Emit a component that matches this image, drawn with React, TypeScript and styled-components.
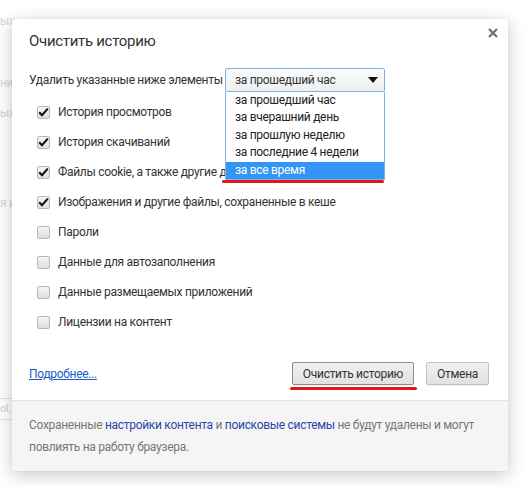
import React from "react";
import styled, { createGlobalStyle } from "styled-components";

const Global = createGlobalStyle`
  html, body { margin: 0; padding: 0; background: #fff; }
  body { font-family: Roboto, "Noto Sans", sans-serif; font-size: 12px; letter-spacing: -0.3px; color: #333; }
  * { box-sizing: border-box; }
`;

const Screen = styled.div`
  position: relative;
  width: 527px;
  height: 486px;
  overflow: hidden;
  background: #fff;
`;

const BackPage = styled.div`
  display: flex;
  flex-direction: column;
  padding-top: 12px;
  color: #d6d6d6;
  font-size: 12px;
`;

const BackLine = styled.div<{ $gap: number }>`
  margin-top: ${(p) => p.$gap}px;
  height: 18px;
  line-height: 18px;
`;

const BackButton = styled.div`
  margin-top: 186px;
  width: 22px;
  height: 22px;
  border: 1px solid #e6e6e6;
  border-left: none;
  border-radius: 0 2px 2px 0;
  font-size: 11px;
  line-height: 20px;
  color: #d0d0d0;
  overflow: hidden;
`;

const Dialog = styled.div`
  position: absolute;
  left: 12px;
  top: 19px;
  width: 496px;
  background: #fff;
  border-radius: 2px;
  box-shadow: 0 4px 18px rgba(0, 0, 0, 0.22), 0 0 2px rgba(0, 0, 0, 0.1);
  display: flex;
  flex-direction: column;
`;

const Body = styled.div`
  position: relative;
  padding: 10px 19px 15px 17px;
  display: flex;
  flex-direction: column;
`;

const Close = styled.div`
  position: absolute;
  right: 10px;
  top: 9px;
  width: 10px;
  height: 10px;
  display: flex;
`;

const Title = styled.div`
  font-size: 15px;
  line-height: 22px;
  color: #333;
  margin-top: 1px;
`;

const RangeRow = styled.div`
  display: flex;
  align-items: center;
  margin-top: 16px;
  gap: 4px;
  height: 24px;
`;

const Label = styled.span`
  color: #333;
  white-space: nowrap;
  width: 192px;
`;

const SelectWrap = styled.div`
  position: relative;
  width: 160px;
  height: 24px;
`;

const SelectBox = styled.div`
  width: 160px;
  height: 24px;
  border: 1px solid #7fb0e6;
  border-radius: 2px;
  background: linear-gradient(#fafafa, #f0f0f0);
  display: flex;
  align-items: center;
  justify-content: space-between;
  padding: 0 6px 0 9px;
  color: #333;
`;

const Arrow = styled.div`
  width: 0;
  height: 0;
  border-left: 5px solid transparent;
  border-right: 5px solid transparent;
  border-top: 6px solid #111;
  margin-top: -1px;
`;

const DropList = styled.div`
  position: absolute;
  left: 0;
  top: 24px;
  width: 160px;
  background: #fff;
  border: 1px solid #7fb0e6;
  border-top: none;
  display: flex;
  flex-direction: column;
  z-index: 5;
`;

const Option = styled.div<{ $active?: boolean }>`
  height: 17.4px;
  line-height: 17px;
  padding-left: 9px;
  color: ${(p) => (p.$active ? "#fff" : "#222")};
  background: ${(p) => (p.$active ? "#3395f7" : "transparent")};
  white-space: nowrap;
`;

const RedMark = styled.div<{ $left: number; $width: number; $top: number }>`
  position: absolute;
  left: ${(p) => p.$left}px;
  top: ${(p) => p.$top}px;
  width: ${(p) => p.$width}px;
  height: 3px;
  border-radius: 2px;
  background: #e2141e;
  z-index: 6;
`;

const Checks = styled.div`
  display: flex;
  flex-direction: column;
  margin-top: 5px;
`;

const CheckRow = styled.label`
  display: flex;
  align-items: center;
  height: 30px;
  padding-left: 8px;
  gap: 8px;
  color: #333;
  white-space: nowrap;
`;

const Box = styled.span`
  width: 13px;
  height: 13px;
  border: 1px solid #b8b8b8;
  border-radius: 2px;
  background: linear-gradient(#f5f5f5, #dedede);
  display: flex;
  align-items: center;
  justify-content: center;
  flex: none;
`;

const Actions = styled.div`
  display: flex;
  align-items: center;
  margin-top: 25px;
  height: 23px;
`;

const More = styled.a`
  color: #1b5cc7;
  text-decoration: underline;
  cursor: pointer;
  flex: 1;
`;

const Button = styled.button<{ $focus?: boolean }>`
  height: 23px;
  padding: 0 10px;
  margin-left: 12px;
  font-family: inherit;
  font-size: 12px;
  letter-spacing: -0.3px;
  color: #333;
  border: 1px solid ${(p) => (p.$focus ? "#8c8c8c" : "#c2c2c2")};
  border-radius: 2px;
  background: linear-gradient(#f0f0f0, #e2e2e2);
  box-shadow: 0 1px 0 rgba(0, 0, 0, 0.06);
`;

const Footer = styled.div`
  height: 71px;
  background: #f5f5f5;
  border-top: 1px solid #e4e4e4;
  padding: 13px 19px 0 17px;
  color: #777;
  line-height: 22px;
  border-radius: 0 0 2px 2px;
`;

const FLink = styled.span`
  color: #2c45a8;
`;

const Check = () => (
  <svg width="11" height="10" viewBox="0 0 11 10">
    <path d="M1.2 5.3 L4 8.2 L9.8 1.6" fill="none" stroke="#111" strokeWidth="2.1" />
  </svg>
);

const items: { label: string; checked: boolean }[] = [
  { label: "История просмотров", checked: true },
  { label: "История скачиваний", checked: true },
  { label: "Файлы cookie, а также другие данные сайтов и плагинов", checked: true },
  { label: "Изображения и другие файлы, сохраненные в кеше", checked: true },
  { label: "Пароли", checked: false },
  { label: "Данные для автозаполнения", checked: false },
  { label: "Данные размещаемых приложений", checked: false },
  { label: "Лицензии на контент", checked: false },
];

const options = [
  "за прошедший час",
  "за вчерашний день",
  "за прошлую неделю",
  "за последние 4 недели",
  "за все время",
];

export default function App() {
  return (
    <Screen>
      <Global />
      <BackPage>
        <BackLine $gap={0}>ых</BackLine>
        <BackLine $gap={44}>ни</BackLine>
        <BackLine $gap={12}>ых</BackLine>
        <BackLine $gap={72}>я и</BackLine>
        <BackButton>ol...</BackButton>
      </BackPage>
      <Dialog>
        <Body>
          <Close>
            <svg width="10" height="10" viewBox="0 0 10 10">
              <path d="M1 1 L9 9 M9 1 L1 9" stroke="#6f6f6f" strokeWidth="2.2" />
            </svg>
          </Close>
          <Title>Очистить историю</Title>
          <RangeRow>
            <Label>Удалить указанные ниже элементы</Label>
            <SelectWrap>
              <SelectBox>
                <span>за прошедший час</span>
                <Arrow />
              </SelectBox>
              <DropList>
                {options.map((o, i) => (
                  <Option key={o} $active={i === options.length - 1}>
                    {o}
                  </Option>
                ))}
              </DropList>
              <RedMark $left={-3} $width={162} $top={112} />
            </SelectWrap>
          </RangeRow>
          <Checks>
            {items.map((it) => (
              <CheckRow key={it.label}>
                <Box>{it.checked && <Check />}</Box>
                {it.label}
              </CheckRow>
            ))}
          </Checks>
          <Actions>
            <More>Подробнее...</More>
            <Button $focus>Очистить историю</Button>
            <Button>Отмена</Button>
          </Actions>
          <RedMark $left={278} $width={127} $top={368} />
        </Body>
        <Footer>
          Сохраненные <FLink>настройки контента</FLink> и <FLink>поисковые системы</FLink> не будут удалены и могут повлиять на работу браузера.
        </Footer>
      </Dialog>
    </Screen>
  );
}
